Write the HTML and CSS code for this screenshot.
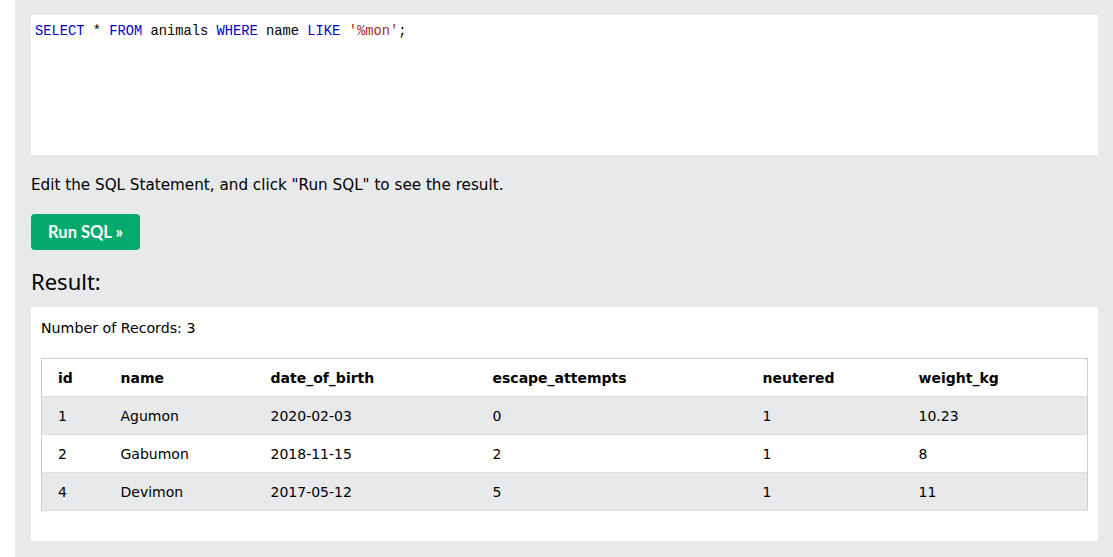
FILE: index.html
```html
<!DOCTYPE html>
<html lang="en">
<head>
<meta charset="utf-8">
<title>SQL Tryit</title>
<link rel="stylesheet" href="styles.css">
</head>
<body>
<div class="page">
  <div class="gutter"></div>
  <main class="panel">
    <div class="editor">
      <div class="code"><span class="kw">SELECT</span> * <span class="kw">FROM</span> animals <span class="kw">WHERE</span> name <span class="kw">LIKE</span> <span class="str">'%mon'</span>;</div>
    </div>
    <p class="hint">Edit the SQL Statement, and click "Run SQL" to see the result.</p>
    <button class="run-btn" type="button">Run SQL »</button>
    <h2 class="result-title">Result:</h2>
    <div class="result-box">
      <div class="records">Number of Records: 3</div>
      <table class="result-table">
        <colgroup>
          <col class="c-id"><col class="c-name"><col class="c-dob"><col class="c-esc"><col class="c-neu"><col class="c-wt">
        </colgroup>
        <thead>
          <tr><th>id</th><th>name</th><th>date_of_birth</th><th>escape_attempts</th><th>neutered</th><th>weight_kg</th></tr>
        </thead>
        <tbody>
          <tr><td>1</td><td>Agumon</td><td>2020-02-03</td><td>0</td><td>1</td><td>10.23</td></tr>
          <tr><td>2</td><td>Gabumon</td><td>2018-11-15</td><td>2</td><td>1</td><td>8</td></tr>
          <tr><td>4</td><td>Devimon</td><td>2017-05-12</td><td>5</td><td>1</td><td>11</td></tr>
        </tbody>
      </table>
    </div>
  </main>
</div>
</body>
</html>
```
FILE: styles.css
```css
html, body {
  margin: 0;
  padding: 0;
  background: #ffffff;
}
body {
  font-family: "DejaVu Sans", Verdana, sans-serif;
  font-size: 14px;
  color: #000;
}
.page {
  display: flex;
  min-height: 557px;
}
.gutter {
  width: 15px;
  flex: none;
  background: #ffffff;
}
.panel {
  flex: 1;
  background: #e7e9eb;
  padding: 15px 15px 16px 16px;
  display: flex;
  flex-direction: column;
  align-items: flex-start;
}
.editor {
  align-self: stretch;
  height: 140px;
  background: #ffffff;
  box-sizing: border-box;
  padding: 9px 4px 7px 4px;
}
.code {
  font-family: "Liberation Mono", "DejaVu Sans Mono", monospace;
  font-size: 13.75px;
  line-height: 16px;
  color: #000;
  white-space: pre;
}
.kw { color: #0000cd; }
.str { color: #a52a2a; }
.hint {
  margin: 19px 0 0 0;
  line-height: 22px;
  font-size: 15.2px;
}
.run-btn {
  margin-top: 18px;
  height: 36px;
  width: 109px;
  border: none;
  border-radius: 4px;
  background: #04aa6d;
  color: #fff;
  font-family: Lato, "Open Sans", sans-serif;
  font-weight: bold;
  font-size: 16.5px;
  padding: 0;
  cursor: pointer;
}
.result-title {
  margin: 16px 0 0 0;
  font-family: "Noto Sans", "Open Sans", sans-serif;
  font-weight: normal;
  font-size: 22px;
  line-height: 30px;
  color: #000;
}
.result-box {
  align-self: stretch;
  margin-top: 11px;
  background: #ffffff;
  padding: 10px 10px 30px 10px;
}
.records {
  line-height: 22px;
  font-size: 14.2px;
}
.result-table {
  margin-top: 19px;
  width: 100%;
  border-collapse: collapse;
  border: 1px solid #cccccc;
  table-layout: fixed;
}
.c-id { width: 71px; }
.c-name { width: 150px; }
.c-dob { width: 222px; }
.c-esc { width: 270px; }
.c-neu { width: 156px; }
.c-wt { width: auto; }
.result-table th,
.result-table td {
  text-align: left;
  vertical-align: top;
  padding: 9px 8px 7px 8px;
  line-height: 21px;
  font-size: 14px;
}
.result-table th:first-child,
.result-table td:first-child {
  padding-left: 16px;
}
.result-table th {
  font-weight: bold;
}
.result-table tr {
  border-bottom: 1px solid #dddddd;
}
.result-table thead tr {
  background: #ffffff;
}
.result-table tbody tr:nth-child(odd) {
  background: #e7e9eb;
}
.result-table tbody tr:nth-child(even) {
  background: #ffffff;
}
```
